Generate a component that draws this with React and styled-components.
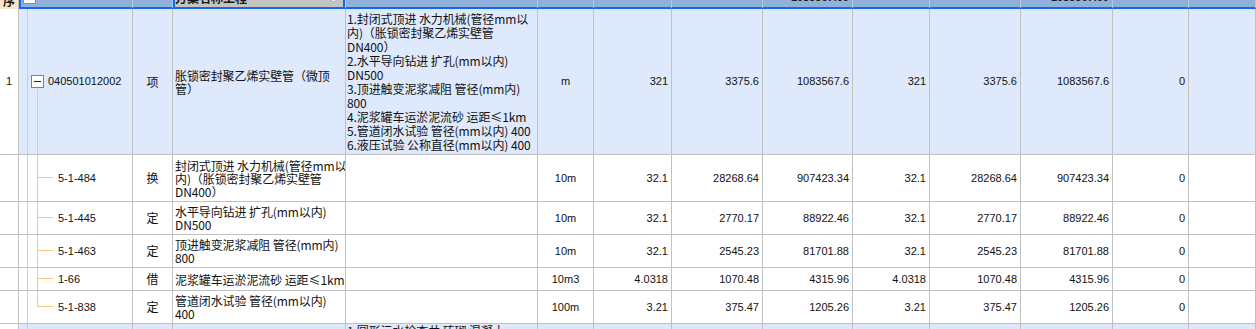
import React from 'react';
import styled, { createGlobalStyle, css } from 'styled-components';

const GlobalStyle = createGlobalStyle`
  html, body { margin: 0; padding: 0; background: #fff; overflow: hidden; }
  body {
    font-family: "Noto Sans CJK SC", "Liberation Sans", sans-serif;
    font-size: 12px;
    color: #000;
  }
`;

const COLS = '19px 114px 40px 173px 192px 56px 78px 91px 90px 77px 91px 92px 76px 1fr';
const GRID = '#c0c0c0';
const ROW_BLUE = '#dee9fc';
const SEL_BLUE = '#1567f0';
const TREE = '#f9c77e';

const Sheet = styled.div`
  width: 1256px;
  height: 329px;
  overflow: hidden;
  display: flex;
  flex-direction: column;
`;

const Row = styled.div`
  display: grid;
  grid-template-columns: ${COLS};
  height: ${({ $h }) => $h}px;
  flex: none;
`;

/* ---------- header ---------- */
const CornerCell = styled.div`
  box-sizing: border-box;
  background: #fde5c6;
  border-right: 1px solid ${GRID};
  display: flex;
  align-items: flex-end;
  justify-content: center;
  overflow: hidden;
`;

const HeadCell = styled.div`
  box-sizing: border-box;
  min-width: 0;
  position: relative;
  overflow: hidden;
  display: flex;
  align-items: flex-end;
  justify-content: ${({ $align }) => ($align === 'right' ? 'flex-end' : 'flex-start')};
  padding: 0 3px 0 2px;
  background: #90b1db;
  border-right: 1px solid #b6c9e3;
  border-bottom: 2px solid ${SEL_BLUE};
  ${({ $first }) => $first && css`border-left: 2px solid ${SEL_BLUE};`}
  ${({ $focus }) =>
    $focus &&
    css`
      background: #c4c4c4;
      box-shadow: inset 2px 0 0 ${SEL_BLUE}, inset -2px 0 0 ${SEL_BLUE};
    `}
`;

const HeadText = styled.span`
  font-weight: bold;
  font-size: 12px;
  line-height: 12px;
  white-space: nowrap;
  margin-bottom: ${({ $mb }) => $mb}px;
  color: #1a1a1a;
`;

const HeadNum = styled.span`
  font-family: "Liberation Sans", Arial, sans-serif;
  font-weight: bold;
  font-size: 11px;
  line-height: 11px;
  white-space: nowrap;
  margin-bottom: 4px;
  color: #1a1a1a;
`;

const HeadCheck = styled.span`
  box-sizing: border-box;
  width: 13px;
  height: 13px;
  background: #fff;
  border: 1px solid #8a8a8a;
  margin-bottom: 3px;
  flex: none;
`;

const HeadKnob = styled.span`
  position: absolute;
  right: 7px;
  bottom: 5px;
  width: 7px;
  height: 7px;
  border-radius: 50%;
  background: #fff;
  border: 1px solid #9aa6b8;
`;

/* ---------- body cells ---------- */
const Cell = styled.div`
  box-sizing: border-box;
  min-width: 0;
  position: relative;
  overflow: hidden;
  display: flex;
  align-items: ${({ $valign }) => $valign || 'center'};
  justify-content: ${({ $align }) =>
    $align === 'right' ? 'flex-end' : $align === 'center' ? 'center' : 'flex-start'};
  padding: ${({ $pad }) => $pad || '0 2px'};
  background: ${({ $bg }) => $bg || '#fff'};
  border-right: 1px solid ${GRID};
  border-bottom: 1px solid ${GRID};
`;

const Num = styled.span`
  font-family: "Liberation Sans", Arial, sans-serif;
  font-size: 11px;
  line-height: 13px;
  white-space: nowrap;
  color: #111;
`;

const Han = styled.span`
  font-size: 12px;
  line-height: 14px;
  white-space: nowrap;
  color: #111;
`;

const TextBlock = styled.div`
  display: flex;
  flex-direction: column;
  font-size: 12px;
  line-height: ${({ $lh }) => $lh}px;
  letter-spacing: -0.1px;
  white-space: nowrap;
  color: #111;
`;

const Line = styled.span`
  display: block;
`;

const Guide = styled.span`
  position: absolute;
  left: ${({ $x }) => $x}px;
  width: 1px;
  top: ${({ $top }) => $top};
  bottom: ${({ $bottom }) => $bottom};
  background: ${TREE};
`;

const Branch = styled.span`
  position: absolute;
  left: 18px;
  width: 16px;
  height: 1px;
  top: calc(50% - 1px);
  background: ${TREE};
`;

const Toggle = styled.span`
  box-sizing: border-box;
  position: relative;
  z-index: 1;
  flex: none;
  width: 13px;
  height: 13px;
  margin-right: 4px;
  border: 1px solid #808080;
  background: #fff;
  display: flex;
  align-items: center;
  justify-content: center;
  &::before {
    content: '';
    width: 7px;
    height: 1px;
    background: #222;
  }
`;

const Lines = ({ lines, lh }) => (
  <TextBlock $lh={lh}>
    {lines.map((l, i) => (
      <Line key={i}>{l}</Line>
    ))}
  </TextBlock>
);

const parent = {
  idx: '1',
  code: '040501012002',
  type: '项',
  name: ['胀锁密封聚乙烯实壁管（微顶', '管）'],
  desc: [
    '1.封闭式顶进 水力机械(管径mm以',
    '内)（胀锁密封聚乙烯实壁管',
    'DN400）',
    '2.水平导向钻进 扩孔(mm以内)',
    'DN500',
    '3.顶进触变泥浆减阻 管径(mm内)',
    '800',
    '4.泥浆罐车运淤泥流砂 运距≤1km',
    '5.管道闭水试验 管径(mm以内) 400',
    '6.液压试验 公称直径(mm以内) 400',
  ],
  unit: 'm',
  vals: ['321', '3375.6', '1083567.6', '321', '3375.6', '1083567.6', '0'],
};

const children = [
  {
    code: '5-1-484',
    type: '换',
    name: ['封闭式顶进 水力机械(管径mm以', '内)（胀锁密封聚乙烯实壁管', 'DN400）'],
    unit: '10m',
    vals: ['32.1', '28268.64', '907423.34', '32.1', '28268.64', '907423.34', '0'],
    h: 47,
  },
  {
    code: '5-1-445',
    type: '定',
    name: ['水平导向钻进 扩孔(mm以内)', 'DN500'],
    unit: '10m',
    vals: ['32.1', '2770.17', '88922.46', '32.1', '2770.17', '88922.46', '0'],
    h: 33,
  },
  {
    code: '5-1-463',
    type: '定',
    name: ['顶进触变泥浆减阻 管径(mm内)', '800'],
    unit: '10m',
    vals: ['32.1', '2545.23', '81701.88', '32.1', '2545.23', '81701.88', '0'],
    h: 33,
  },
  {
    code: '1-66',
    type: '借',
    name: ['泥浆罐车运淤泥流砂 运距≤1km'],
    unit: '10m3',
    vals: ['4.0318', '1070.48', '4315.96', '4.0318', '1070.48', '4315.96', '0'],
    h: 23,
  },
  {
    code: '5-1-838',
    type: '定',
    name: ['管道闭水试验 管径(mm以内)', '400'],
    unit: '100m',
    vals: ['3.21', '375.47', '1205.26', '3.21', '375.47', '1205.26', '0'],
    h: 33,
  },
];

const ValueCells = ({ vals, bg }) => (
  <>
    {vals.map((v, i) => (
      <Cell key={i} $bg={bg} $align="right" $pad="0 3px 0 2px">
        <Num>{v}</Num>
      </Cell>
    ))}
    <Cell $bg={bg} />
  </>
);

export default function App() {
  return (
    <>
      <GlobalStyle />
      <Sheet>
        <Row $h={9}>
          <CornerCell>
            <HeadText $mb={2}>序</HeadText>
          </CornerCell>
          <HeadCell $first>
            <HeadCheck />
          </HeadCell>
          <HeadCell />
          <HeadCell $focus>
            <HeadText $mb={3}>方案名称工程</HeadText>
            <HeadKnob />
          </HeadCell>
          <HeadCell />
          <HeadCell />
          <HeadCell />
          <HeadCell />
          <HeadCell $align="right">
            <HeadNum>1083567.60</HeadNum>
          </HeadCell>
          <HeadCell />
          <HeadCell />
          <HeadCell $align="right">
            <HeadNum>1083567.60</HeadNum>
          </HeadCell>
          <HeadCell />
          <HeadCell />
        </Row>

        <Row $h={146}>
          <Cell $align="center" $pad="0">
            <Num>{parent.idx}</Num>
          </Cell>
          <Cell $bg={ROW_BLUE} $pad="0 0 0 12px">
            <Guide $x={8} $top="0" $bottom="-1px" />
            <Guide $x={18} $top="calc(50% + 7px)" $bottom="-1px" />
            <Toggle />
            <Num>{parent.code}</Num>
          </Cell>
          <Cell $bg={ROW_BLUE} $align="center" $pad="0">
            <Han>{parent.type}</Han>
          </Cell>
          <Cell $bg={ROW_BLUE} $pad="0 0 0 2px">
            <Lines lines={parent.name} lh={13} />
          </Cell>
          <Cell $bg={ROW_BLUE} $pad="0 0 0 1px">
            <Lines lines={parent.desc} lh={14} />
          </Cell>
          <Cell $bg={ROW_BLUE} $align="center" $pad="0">
            <Num>{parent.unit}</Num>
          </Cell>
          <ValueCells vals={parent.vals} bg={ROW_BLUE} />
        </Row>

        {children.map((c, i) => {
          const last = i === children.length - 1;
          return (
            <Row key={c.code} $h={c.h}>
              <Cell $pad="0" />
              <Cell $pad="0 0 0 39px">
                <Guide $x={8} $top="0" $bottom="-1px" />
                <Guide $x={18} $top="0" $bottom={last ? 'calc(50% + 1px)' : '-1px'} />
                <Branch />
                <Num>{c.code}</Num>
              </Cell>
              <Cell $align="center" $pad="0">
                <Han>{c.type}</Han>
              </Cell>
              <Cell $pad="0 0 0 2px">
                <Lines lines={c.name} lh={13} />
              </Cell>
              <Cell />
              <Cell $align="center" $pad="0">
                <Num>{c.unit}</Num>
              </Cell>
              <ValueCells vals={c.vals} />
            </Row>
          );
        })}

        <Row $h={146}>
          <Cell $align="center" $pad="0">
            <Num>2</Num>
          </Cell>
          <Cell $bg={ROW_BLUE} $pad="0 0 0 12px">
            <Guide $x={8} $top="0" $bottom="-1px" />
          </Cell>
          <Cell $bg={ROW_BLUE} />
          <Cell $bg={ROW_BLUE} />
          <Cell $bg={ROW_BLUE} $valign="flex-start" $pad="0 0 0 1px">
            <Lines lines={['1.圆形污水检查井 砖砌 混凝土']} lh={14} />
          </Cell>
          <Cell $bg={ROW_BLUE} />
          <ValueCells vals={['', '', '', '', '', '', '']} bg={ROW_BLUE} />
        </Row>
      </Sheet>
    </>
  );
}
